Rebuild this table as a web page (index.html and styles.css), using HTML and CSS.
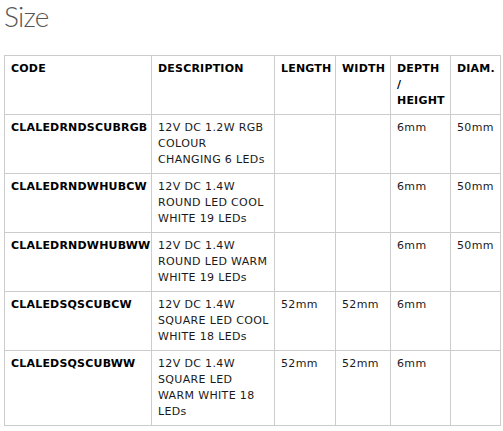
FILE: index.html
```html
<!DOCTYPE html>
<html>
<head>
<meta charset="utf-8">
<link rel="stylesheet" href="styles.css">
</head>
<body>
<div class="page">
  <h1 class="title">Size</h1>
  <table class="spec">
    <colgroup>
      <col class="c-code"><col class="c-desc"><col class="c-len"><col class="c-wid"><col class="c-dep"><col class="c-dia">
    </colgroup>
    <thead>
      <tr><th>CODE</th><th>DESCRIPTION</th><th>LENGTH</th><th>WIDTH</th><th>DEPTH / HEIGHT</th><th>DIAM.</th></tr>
    </thead>
    <tbody>
      <tr><td class="code">CLALEDRNDSCUBRGB</td><td>12V DC 1.2W RGB COLOUR CHANGING 6 LEDs</td><td></td><td></td><td>6mm</td><td>50mm</td></tr>
      <tr><td class="code">CLALEDRNDWHUBCW</td><td>12V DC 1.4W ROUND LED COOL WHITE 19 LEDs</td><td></td><td></td><td>6mm</td><td>50mm</td></tr>
      <tr><td class="code">CLALEDRNDWHUBWW</td><td>12V DC 1.4W ROUND LED WARM WHITE 19 LEDs</td><td></td><td></td><td>6mm</td><td>50mm</td></tr>
      <tr><td class="code">CLALEDSQSCUBCW</td><td>12V DC 1.4W SQUARE LED COOL WHITE 18 LEDs</td><td>52mm</td><td>52mm</td><td>6mm</td><td></td></tr>
      <tr><td class="code">CLALEDSQSCUBWW</td><td>12V DC 1.4W SQUARE LED WARM WHITE 18 LEDs</td><td>52mm</td><td>52mm</td><td>6mm</td><td></td></tr>
    </tbody>
  </table>
</div>
</body>
</html>
```
FILE: styles.css
```css
html, body {
  margin: 0;
  padding: 0;
  background: #fff;
}
.page {
  padding: 0 0 0 4px;
}
.title {
  margin: 0 0 23px 0;
  padding: 1px 0 0 0;
  font-family: "Lato", sans-serif;
  font-weight: 300;
  font-size: 28px;
  line-height: 31px;
  letter-spacing: -0.8px;
  color: #555;
}
.spec {
  border-collapse: collapse;
  table-layout: fixed;
  width: 496px;
  font-family: "DejaVu Sans", Verdana, sans-serif;
  font-size: 11px;
  line-height: 16px;
  letter-spacing: 0.35px;
  color: #1a1a1a;
}
.c-code { width: 147px; }
.c-desc { width: 123px; }
.c-len { width: 61px; }
.c-wid { width: 55px; }
.c-dep { width: 60px; }
.c-dia { width: 50px; }
.spec th, .spec td {
  border: 1px solid #cccccc;
  padding: 5px 4px 5px 6px;
  text-align: left;
  vertical-align: top;
}
.spec th {
  font-weight: bold;
  letter-spacing: 0.2px;
  color: #000;
}
.spec td.code {
  font-weight: bold;
  letter-spacing: 0.2px;
  color: #000;
}
```
